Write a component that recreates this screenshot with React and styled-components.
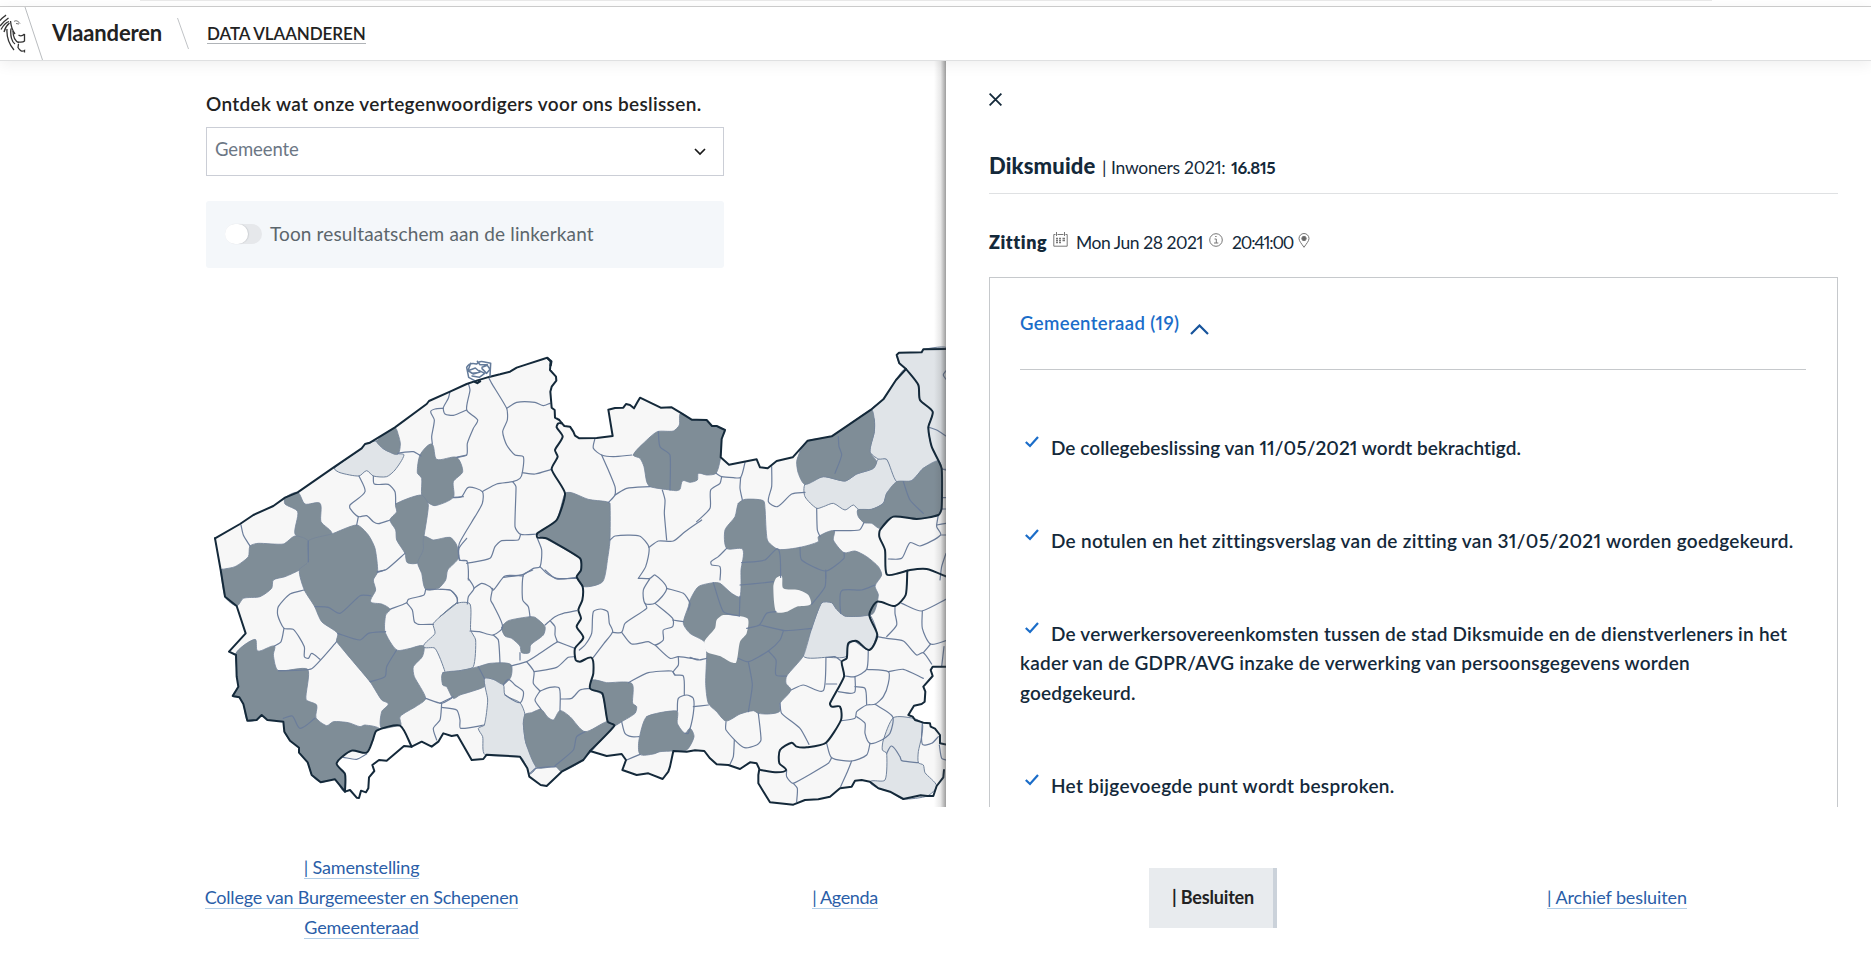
import React from 'react';
import styled, { createGlobalStyle } from 'styled-components';

const Global = createGlobalStyle`
  *, *::before, *::after { box-sizing: border-box; }
  body { margin: 0; background: #fff; font-family: Lato, "Liberation Sans", sans-serif; font-size: 18px; color: #14293a; font-variant-numeric: proportional-nums; }
  p, h1, h2 { margin: 0; font-weight: inherit; font-size: inherit; }
`;

/* ---------- shared text ---------- */
const Text = styled.span`
  font-size: ${(p) => p.$size || 18}px;
  font-weight: ${(p) => p.$weight || 400};
  letter-spacing: ${(p) => p.$track || 0}px;
  color: ${(p) => p.$color || 'inherit'};
  white-space: nowrap;
`;

/* ---------- header ---------- */
const TopStrip = styled.div`
  height: 7px;
  padding-left: 140px;
  border-bottom: 1px solid #cfcfcf;
  &::before { content: ''; display: block; width: 1572px; height: 1px; background: #e9e9e9; }
`;
const Header = styled.header`
  position: relative;
  z-index: 3;
  display: flex;
  height: 54px;
  background: #fff;
  border-bottom: 1px solid #dfe0e1;
  box-shadow: 0 3px 14px rgba(0, 0, 0, 0.07);
`;
const Brand = styled.div`
  width: 133px;
  padding-left: 8px;
  line-height: 51px;
`;
const HeaderLink = styled.a`
  align-self: flex-start;
  margin: 10px 0 0 18px;
  height: 27px;
  line-height: 32px;
  border-bottom: 1px solid #b0b4b8;
`;

/* ---------- body ---------- */
const Main = styled.main`
  display: grid;
  grid-template-columns: 946px 925px;
  height: 746px;
`;
const MapSide = styled.section`
  position: relative;
  display: flex;
  flex-direction: column;
  padding: 28px 0 0 206px;
  overflow: hidden;
  &::after {
    content: '';
    position: absolute;
    top: 0; right: 0; bottom: 0;
    width: 12px;
    background: linear-gradient(to right, rgba(60,60,60,0), rgba(60,60,60,0.12) 55%, rgba(60,60,60,0.5));
  }
`;
const Label = styled.h1`
  height: 30px;
  line-height: 30px;
`;
const Select = styled.div`
  display: flex;
  justify-content: space-between;
  width: 518px;
  height: 49px;
  margin-top: 8px;
  padding: 0 17px 0 8px;
  border: 1px solid #cbced6;
  line-height: 43px;
  svg { margin-top: 20px; }
`;
const ToggleCard = styled.div`
  display: flex;
  align-items: center;
  width: 518px;
  height: 67px;
  margin-top: 25px;
  padding: 0 0 3px 19px;
  gap: 8px;
  border-radius: 3px;
  background: #f4f7fa;
`;
const Switch = styled.div`
  width: 37px;
  height: 20px;
  margin-top: 2px;
  border-radius: 10px;
  background: #e6e8eb;
  &::before {
    content: '';
    display: block;
    width: 23px;
    height: 20px;
    border-radius: 10px;
    background: #fff;
    box-shadow: 1px 0 1px #cdd0d4;
  }
`;
const MapSvg = styled.svg`
  display: block;
  flex: none;
  margin: 72px 0 0 -1px;
`;

/* ---------- details panel ---------- */
const Details = styled.section`
  padding: 32px 33px 0 43px;
  overflow: hidden;
`;
const CloseIcon = styled.svg`
  display: block;
`;
const Place = styled.div`
  display: flex;
  align-items: baseline;
  height: 51px;
  margin-top: 37px;
  line-height: 46px;
  border-bottom: 1px solid #dfe1e3;
`;
const Session = styled.div`
  display: flex;
  height: 30px;
  margin-top: 33px;
  line-height: 30px;
`;
const Slot = styled.span`
  width: ${(p) => p.$w}px;
  flex: none;
  svg { display: block; margin-top: ${(p) => p.$top || 0}px; }
`;
const Card = styled.div`
  height: 560px;
  margin-top: 20px;
  padding: 30px 31px 0 30px;
  border: 1px solid #c6c9cc;
`;
const CardHead = styled.div`
  display: flex;
  height: 62px;
  line-height: 30px;
  border-bottom: 1px solid #c6c9cc;
  svg { margin: 16px 0 0 11px; }
`;
const Decisions = styled.div`
  padding-top: 63px;
`;
const Decision = styled.p`
  margin-bottom: 63.2px;
  line-height: 29.7px;
`;
const Line = styled.span`
  display: flex;
  svg { flex: none; margin: 3px 12px 0 5px; }
`;

/* ---------- footer ---------- */
const Footer = styled.footer`
  display: grid;
  grid-template-columns: 723px 244px 492px 316px;
  align-items: center;
  height: 90px;
  margin-top: 45px;
`;
const FooterCol = styled.nav`
  display: flex;
  flex-direction: column;
  align-items: center;
  gap: 3px;
  padding-bottom: ${(p) => (p.$boxed ? 0 : 4)}px;
`;
const FooterLink = styled.a`
  height: 27px;
  line-height: 30px;
  border-bottom: 1px solid #b3cfe8;
`;
const Active = styled.a`
  width: 128px;
  height: 60px;
  padding-left: 23px;
  line-height: 59px;
  background: #e8ebee;
  border-right: 4px solid #cbd2da;
`;

/* ---------- map geometry ---------- */
const ORIGIN = { A: [0, 0], B: [705, 0], C: [1455, 0], D: [0, 690], E: [705, 690], F: [1455, 690] };

/* "A 10,20 30,40 B 5,6" -> list of points on the whole map */
const parse = (text) => {
  let o = ORIGIN.A;
  const out = [];
  text.trim().split(/\s+/).forEach((t) => {
    if (ORIGIN[t]) o = ORIGIN[t];
    else {
      const [x, y] = t.split(',').map(Number);
      out.push([x + o[0], y + o[1]]);
    }
  });
  return out;
};
const straight = (text, close) => 'M' + parse(text).map((p) => p.join(' ')).join('L') + (close ? 'Z' : '');
const smooth = (text, close) => {
  const p = parse(text);
  const n = p.length;
  const at = (i) => (close ? p[(i + n) % n] : p[Math.max(0, Math.min(n - 1, i))]);
  /* control point: along from->to, a quarter of the segment long */
  const handle = (base, from, to, len, sign) => {
    const dx = to[0] - from[0];
    const dy = to[1] - from[1];
    const m = Math.min(0.22 * len, 14) / (Math.hypot(dx, dy) || 1);
    return `${(base[0] + sign * dx * m).toFixed(1)} ${(base[1] + sign * dy * m).toFixed(1)}`;
  };
  let d = `M${p[0].join(' ')}`;
  for (let i = 0; i < (close ? n : n - 1); i++) {
    const [a, b, c, e] = [at(i - 1), at(i), at(i + 1), at(i + 2)];
    const len = Math.hypot(c[0] - b[0], c[1] - b[1]);
    d += `C${handle(b, a, c, len, 1)} ${handle(c, b, e, len, -1)} ${c.join(' ')}`;
  }
  return d + (close ? 'Z' : '');
};

const NORTH = 'A 30,595 105,552 145,525 205,498 240,473 278,457 385,383 470,325 480,312 495,308 570,262 665,192 672,183 735,155 B 80,132 110,122 150,110 180,103 210,95 230,83 260,73 310,57 322,53 332,65 330,90 348,110 349,122 335,140 331,155 335,203 344,210 345,233 358,240 366,250 373,258 390,260 400,275 405,287 418,295 470,294 518,288 505,209 525,204 550,203 558,192 570,195 582,205 592,187 600,173 662,203 695,202 725,220 755,239 C 20,239 50,240 66,258 80,258 105,270 95,297 92,352 117,374 200,358 210,382 233,385 260,363 308,352 353,302 425,289 543,209 580,178 618,120 648,87 628,70 620,45 627,38 695,37 700,28 775,27';
const EAST = 'F 775,290 728,290 722,300 728,318 700,350 706,365 704,395 695,402 672,407 655,435 668,440 675,450 700,458 720,460 722,470 735,476 750,495 750,520 775,525';
const SOUTH = 'F 762,600 760,622 740,648 730,678 712,678 692,676 640,687 600,665 565,655 540,635 515,630 495,632 485,650 450,655 420,680 385,688 345,690 310,704 240,697 205,640 205,615 208,597 200,580 180,577 150,597 115,585 80,583 60,565 43,543 15,541 E 740,545 700,543 690,590 685,605 668,627 625,610 590,615 547,600 558,570 545,552 500,558 450,543 430,570 365,605 320,648 302,645 268,620 262,595 240,560 140,554 130,567 95,570 52,495 35,498 10,490 D 700,515 680,530 650,515 620,530 597,528 545,572 522,570 502,585 508,603 492,622 490,655 483,667 468,662 462,684 455,683 435,660 420,665 390,628 347,637 320,615 308,577 282,548 282,533 255,512 238,485 235,455 187,450 170,435 155,450 127,452 115,402 103,382 83,378 100,350 95,320 93,255 72,245 122,190 95,108 60,80 47,0 A 30,595';

const LAND = `${NORTH} ${EAST} ${SOUTH}`;
const ENCLAVE = 'D 620,530 585,467 515,482 503,512 485,548 460,560 440,567 415,562 395,580 420,612 420,665 435,660 455,683 462,684 468,662 483,667 490,655 492,622 508,603 502,585 522,570 545,572 597,528';

const DARK = [
  'A 515,303 570,264 580,285 586,312 578,343 545,332 530,322',
  'A 240,473 278,457 300,492 345,490 348,545 380,582 310,603 270,582 278,515 240,492',
  'A 645,345 680,312 695,358 755,352 773,395 745,425 745,472 690,497 665,485 650,465 650,415 637,398',
  'A 572,492 648,465 670,495 657,590 655,630 640,668 607,668 600,640 575,600 572,570 555,540 575,515',
  'A 657,590 685,600 735,592 755,615 760,655 728,690 722,720 700,745 662,748 650,700 638,668 655,630',
  'A 52,688 90,680 130,650 135,618 160,610 235,612 270,588 310,603 310,665 283,690 240,710 205,720 D 200,55 165,80 115,85 95,108 60,80 47,0',
  'A 310,603 380,582 455,555 490,585 510,625 518,695 D 505,30 512,60 497,95 530,102 555,118 542,135 540,185 575,240 612,236 655,228 652,260 625,290 628,320 662,385 635,408 585,440 587,467 530,475 530,425 550,402 530,390 495,335 395,215 398,190 350,155 328,108 298,60 283,0 A 310,665',
  'D 93,250 150,208 158,243 208,228 205,255 220,302 308,298 303,388 335,405 333,443 365,467 385,455 430,458 465,470 480,465 525,478 503,512 485,548 440,542 395,580 420,612 420,665 390,628 347,637 320,615 308,577 282,548 282,533 255,512 238,485 235,455 187,450 170,435 155,450 127,452 115,402 103,382 83,378 100,350',
  'E 8,310 60,302 115,290 150,280 212,283 213,320 190,343 160,328 133,325 133,350 60,375 40,385 20,350 8,345',
  'E 185,172 205,152 270,140 285,142 315,170 310,195 272,225 268,248 245,248 240,228 215,205 195,198',
  'B 292,582 350,540 375,460 395,458 445,478 500,485 510,490 510,600 503,655 E 488,35 432,50 410,20 B 423,690 420,655 315,595',
  'B 580,345 610,310 652,275 700,273 718,255 722,220 755,239 C 50,240 66,258 105,270 95,297 92,352 78,400 50,405 25,400 22,420 0,427 B 728,422 720,448 710,452 690,450 630,440 620,425 612,380 600,355',
  'C 330,335 353,302 425,289 543,209 553,240 553,275 540,335 560,365 550,385 500,402 465,423 400,410 345,433 325,400 320,365',
  'C 503,510 545,508 580,490 590,460 620,425 665,422 700,385 745,362 755,385 755,505 745,525 680,537 610,530 570,565 545,550 522,548 505,530',
  'C 145,490 165,478 220,482 225,505 232,600 265,628 330,622 385,605 385,590 432,572 430,600 462,638 495,633 530,650 565,680 F 575,15 555,48 565,75 550,130 515,138 465,138 440,118 425,98 395,98 365,175 340,258 290,318 288,340 303,360 270,400 268,425 235,432 205,430 190,422 150,432 108,453 80,425 55,400 47,340 50,250 43,215 0,190 E 730,160 745,110 F 0,90 25,50 70,38 90,40 125,70 150,80 153,0 C 158,628 110,625 105,570 135,530',
  'E 458,330 500,338 575,340 578,400 590,410 585,430 545,455 523,467 503,455 487,375 450,355',
  'E 255,433 275,428 303,418 322,440 340,450 360,422 390,440 435,485 500,455 520,467 430,570 365,605 347,590 290,592 258,520 250,460',
  'E 620,440 710,423 712,460 735,490 750,475 762,500 740,540 700,543 660,545 640,552 600,553 597,510',
];
const PALE = [
  'A 388,385 470,325 480,312 515,303 530,322 545,332 578,341 597,345 570,390 545,410 505,408 485,392 462,408 405,398',
  'E 0,140 50,100 90,102 92,180 107,210 100,290 60,302 8,308 D 720,305 690,235 655,230 690,190 685,160 755,98 E 50,100',
  'E 133,325 160,328 190,343 195,375 240,398 255,433 250,460 258,520 288,590 270,612 262,595 240,560 135,554 128,500 115,475 133,465 143,390',
  'C 345,433 400,410 465,423 500,402 550,385 565,357 590,358 620,425 590,460 580,490 545,508 505,508 490,495 465,510 430,490 400,500 380,505 345,470',
  'C 543,209 580,178 618,120 648,87 685,135 690,180 728,215 715,262 725,320 745,362 700,385 665,422 620,425 590,358 565,357 540,335 553,275 553,240',
  'C 627,38 695,37 700,28 775,27 775,390 755,385 745,362 725,320 715,262 728,215 690,180 685,135 648,87 628,70 620,45',
  'F 395,98 425,98 440,118 465,138 515,138 540,135 560,190 538,240 490,213 473,230 468,260 410,262 340,258 365,175',
  'F 610,443 670,445 697,460 695,500 685,545 685,578 700,585 705,608 740,648 712,678 640,687 600,665 565,655 540,635 585,630 590,550 577,540 580,510',
];
const PATCHES = [
  'F 100,135 172,145 170,190 150,215 138,278 120,275 90,258 50,245 43,215 75,175 80,150',
  'F 258,25 275,18 280,55 325,60 355,75 362,103 320,110 290,125 258,125 250,50',
];
const THIN = [
  'A 735,155 730,175 715,203 720,222 745,226 785,210', 'A 715,205 690,207 677,215 688,240 680,290 682,312',
  'A 755,352 785,345', 'A 578,340 595,337 625,335 648,348', 'A 505,408 508,432 550,433 570,455 572,492',
  'A 462,408 480,455 435,495 435,505 460,530 485,527 505,545 520,551 555,540', 'A 460,530 455,555',
  'A 108,555 115,585 135,618', 'A 517,697 545,688 600,640', 'A 745,472 775,470', 'A 310,603 310,665',
  'A 785,595 762,625 765,660 785,662',
  'B 85,130 90,150 80,210 113,240 100,265 82,310 80,345 52,352',
  'B 147,115 155,130 200,205 202,240 188,275 200,315 225,345 250,350 247,398 240,415 218,425 170,432 127,455',
  'B 200,205 230,187 285,187 310,197 330,190', 'B 247,398 285,402 335,388',
  'B 40,473 65,470 85,442 127,455 127,490 105,530 58,610 58,660 80,662 85,690 85,720',
  'B 218,425 228,440 225,560 242,583 292,582', 'B 242,583 235,600 185,602 165,620 150,655 80,670',
  'B 292,595 305,630 300,680 280,685 250,703 190,712', 'B 300,680 320,700 350,715 410,715',
  'B 465,295 460,325 485,345 520,350 575,345', 'B 485,345 505,390 525,440 525,465 505,488',
  'B 525,465 560,445 630,440', 'B 667,450 675,480 673,520 680,600', 'B 510,600 525,588 598,588 627,622 617,680 595,715',
  'B 627,622 655,603 700,603 735,575 785,540', 'B 655,275 660,320 690,345 690,450',
  'E 595,25 630,25 645,15 680,55 645,100 615,100 610,60 630,25',
  'C 78,400 95,410 130,413 152,412 165,368', 'C 152,412 150,445 157,480',
  'C 245,380 245,440 235,485 262,500 305,462 345,457', 'C 95,410 90,430 62,450 60,505 20,545',
  'C 380,505 382,570 390,590', 'C 445,290 447,320 455,345 435,400', 'C 432,572 508,570 522,548',
  'C 640,425 660,480 700,520', 'C 717,262 740,270 768,288', 'C 772,88 760,105 772,122',
  'C 110,625 85,650 63,665 65,675 90,680 90,720', 'C 155,668 225,660 265,628 272,712',
  'C 330,622 335,660 407,693 462,655 462,638', 'C 407,693 407,715',
  'C 595,657 635,655 660,608 690,618 752,585 740,560 745,525', 'C 740,555 768,550', 'C 755,585 768,585',
  'C 757,388 768,388', 'C 757,473 768,473', 'C 757,507 768,507', 'C 768,640 755,680 750,720',
  'D 298,60 255,72 220,110 218,135 237,175 265,178 298,230 298,260 310,265 320,250 345,268',
  'D 237,175 228,215 208,228', 'D 220,302 320,296 395,215', 'D 330,110 370,112 405,130 465,77 497,77',
  'D 398,190 465,210 490,190 542,185', 'D 575,240 545,290 540,320 495,335', 'D 235,445 262,438 285,475 330,445',
  'D 517,5 540,0', 'D 662,58 657,75 610,88 605,98 555,118', 'D 605,98 622,120 628,155 640,163 685,163',
  'D 662,58 735,60 757,85 757,98', 'D 662,385 710,400 740,385',
  'D 710,400 705,450 685,475 695,510', 'D 710,412 755,420 765,450 767,475 838,465', 'D 415,562 455,568 485,552',
  'E 85,25 102,55 85,80 82,102', 'E 102,55 125,40 150,50 160,60 195,18 250,18',
  'E 158,55 152,90 160,105 188,170 160,195 118,185 90,183', 'E 278,0 250,15 248,90 265,110 270,140',
  'E 315,0 350,27 410,22', 'E 160,195 175,210 180,278', 'E 0,58 30,60 50,80 53,100',
  'E 315,165 345,140 370,130 410,122', 'E 330,152 345,170 345,195 352,215', 'E 240,248 240,270',
  'E 352,215 405,235', 'E 212,288 260,275 300,250 352,215', 'E 260,275 282,305 280,340 300,363',
  'E 282,305 350,292 385,262 405,260', 'E 190,345 205,328 225,345 250,365 240,398 195,375',
  'E 300,363 330,352 358,355 360,422', 'E 300,363 285,390 303,418', 'E 362,387 395,385 420,360 450,355',
  'E 418,240 435,225 455,190 460,125 482,117 503,125 508,160 518,185 492,220 460,262',
  'E 518,187 545,187 555,160 620,115 615,100', 'E 545,187 575,222 625,215 645,225 670,210 670,180 698,170 698,145 645,100',
  'E 680,55 730,70 750,100 745,120', 'E 698,150 730,155', 'E 645,225 690,265 715,260 775,268',
  'E 715,260 715,285 700,305 705,315 730,318 733,375', 'E 565,338 625,308 695,303 705,315',
  'E 712,423 715,385 740,375 760,385 760,430 745,490 735,490', 'E 545,455 555,490 575,500 597,500', 'E 560,570 600,553',
  'E 0,400 40,380', 'E 345,587 400,540 410,500 435,485', 'E 270,610 288,595 347,590', 'E 115,290 133,325',
  'F 70,38 100,125 148,138', 'F 150,80 148,138', 'F 150,45 225,38 250,35', 'F 258,125 230,130 208,165 170,175',
  'F 210,165 285,182 365,175', 'F 280,183 270,210 235,243 175,275 145,265', 'F 235,243 258,270 258,315 290,318',
  'F 175,275 187,345 175,425', 'F 365,103 405,50 407,0', 'F 555,45 515,60 455,62 450,100 452,130',
  'F 0,262 25,270 50,265', 'F 10,410 55,405', 'F 108,455 108,480 160,532 200,525 213,510 205,430',
  'F 133,510 130,560 120,583', 'F 270,400 275,430 330,475 357,523', 'F 303,360 340,345 400,362 408,262',
  'F 408,342 440,342', 'F 410,262 435,260 452,272', 'F 465,318 495,320 530,298 535,240', 'F 495,320 495,365 480,370 445,365',
  'F 495,350 525,355 530,403', 'F 530,298 595,305 595,340 580,380 555,403 530,405 500,425 495,445 455,452',
  'F 555,403 608,440 600,490 575,510 540,520 525,490 525,460 500,440', 'F 595,305 640,298 700,325',
  'F 562,200 590,205 640,213 680,255 700,248 725,282', 'F 615,108 615,130 620,165 590,200',
  'F 635,100 695,123 768,88', 'F 697,123 697,175 722,222 768,212', 'F 722,222 700,248', 'F 762,230 755,290',
  'F 697,460 697,523 725,520 745,500', 'F 540,520 530,555 485,573 425,563 410,520', 'F 485,573 470,610 452,650',
  'F 425,563 415,580 310,640 290,620 290,600', 'F 310,640 322,655 320,695',
  'F 590,550 605,528 630,560 635,572 685,578', 'F 748,525 755,565 768,570',
];
const THICK = [
  'B 366,250 355,250 350,262 368,290 345,330 353,350 335,388 375,460 350,540 292,580 292,592 320,595 420,655 423,690 410,710 E 428,50 427,90 415,120 423,145 410,170 430,203 405,235 407,270 420,275 455,263 460,310 450,355 487,370 503,455 523,467 450,543',
  'C 648,87 685,135 690,180 728,215 715,262 725,320 755,385 755,505 745,525 680,537 610,530 570,570 568,590 585,630 590,703 625,700 660,690 710,687 775,712',
  'C 652,692 F 647,75 615,108 562,95 538,135 562,195 538,240 500,213 475,220 470,265 455,275 462,320 420,400 425,410 450,410 453,450 408,518 350,532 320,530 305,518 270,540 268,580 288,600 260,607 212,600',
  'D 620,530 585,467 515,482 503,512 485,548 440,542 395,580 420,612 420,665',
];
const SCRIBBLE = 'M80 82c8-16 22-12 30-10 8-12 20-8 42-2l-2 38M80 82l6 30 18 10M92 70l-8 22 22-8 14 12-20 6-12-8M112 64l8 10 22 0M126 82l16-6 8 12-10 12-14-14M96 108l22 4 16-12-16-8M84 92l12 8 16-2';

function FlandersMap() {
  return (
    <MapSvg width="741" height="467" viewBox="0 0 2223 1401" fill="none" strokeLinejoin="round" strokeLinecap="round">
      <path d={straight(LAND, true)} fill="#f7f7f7" />
      <g fill="#e0e4e8" stroke="#71839c" strokeWidth="3">{PALE.map((d) => <path key={d} d={smooth(d, true)} />)}</g>
      <g fill="#7f8d97" stroke="#76869a" strokeWidth="2.5">{DARK.map((d) => <path key={d} d={smooth(d, true)} />)}</g>
      <g fill="#f7f7f7">{PATCHES.map((d) => <path key={d} d={smooth(d, true)} />)}</g>
      <path d={straight(ENCLAVE, true)} fill="#fff" />
      <g stroke="#6b7d9b" strokeWidth="3.6">{THIN.map((d) => <path key={d} d={smooth(d)} />)}</g>
      <g stroke="#14293a" strokeWidth="6">
        {[NORTH, EAST, SOUTH].map((d) => <path key={d} d={straight(d)} />)}
        {THICK.map((d) => <path key={d} d={smooth(d)} />)}
      </g>
      <g transform="translate(705 0)">
        <path d={SCRIBBLE} stroke="#647b9a" strokeWidth="4.6" />
        <path d="M104 125l8 4 8-5M324 56l10 8-2 12" stroke="#14293a" strokeWidth="7" />
      </g>
    </MapSvg>
  );
}

/* ---------- icons ---------- */
const Lion = () => (
  <svg width="44" height="53" viewBox="0 0 44 53" fill="none" stroke="#333" strokeWidth="1.3">
    <path d="M25 0L42.500 53" stroke="#b9bcbf" strokeWidth="1" />
    <path d="M0 13.500C2 11 4 10 6 8M0 19C3 15 5 13.500 8.500 11M1 22.500C4 17 6 15.500 9 14.500M4 25C5 21 7 18 9.500 16M10.500 14C11 19 12 23 15 27M7 22C6.500 29 8 36 14 43M11 21.500C10 29 12 35 15 37" />
    <path d="M14 14.500C16 13 18 14 20 16.500M16 16.500L19 17" strokeWidth="0.700" />
    <path d="M13 24C13 31 15 34 19 36M18.500 28C20.500 29.500 23 28.500 24.500 27M24.500 27V34C22.500 36 20 35 17.500 35M18.500 37L18 40.500C20 44 22 45 24.500 43.500V45.500" />
  </svg>
);
const Check = () => (
  <svg width="14" height="12" viewBox="0 0 14 12" fill="none" stroke="#1b6dc9" strokeWidth="2.200">
    <path d="M0.800 6L5 10L13 1" />
  </svg>
);
const Calendar = () => (
  <svg width="15" height="15" viewBox="0 0 15 15" fill="none" stroke="#777" strokeWidth="1">
    <path d="M2.500 2.500H.8V14.200H14.200V2.500H12.500M4.500 2.500H10.500M3.500 0V4M11.500 0V4" />
    <path d="M3 6.500H5M6 6.500H8M9.500 6.500H12M3 8.500H5M6 8.500H8M9.500 8.500H12M3 10.500H5M6 10.500H8" strokeWidth="1.400" />
  </svg>
);
const Info = () => (
  <svg width="14" height="14" viewBox="0 0 14 14" fill="none" stroke="#777">
    <circle cx="7" cy="7" r="6.300" />
    <path d="M5.500 6H7.300V10M5 10H9.300M6.200 3.500H7.600" />
  </svg>
);
const Pin = () => (
  <svg width="12" height="15" viewBox="0 0 12 15" fill="none" stroke="#777">
    <path d="M6 14.300C3.500 10.500 1 8 1 5.500A5 5 0 0 1 11 5.500C11 8 8.500 10.500 6 14.300Z" />
    <circle cx="6" cy="5.500" r="2.200" fill="#666" />
  </svg>
);

/* each line: text, letter-spacing */
const DECISIONS = [
  [['De collegebeslissing van 11/05/2021 wordt bekrachtigd.', 0.04]],
  [['De notulen en het zittingsverslag van de zitting van 31/05/2021 worden goedgekeurd.', 0.28]],
  [
    ['De verwerkersovereenkomsten tussen de stad Diksmuide en de dienstverleners in het', 0.22],
    ['kader van de GDPR/AVG inzake de verwerking van persoonsgegevens worden', 0.24],
    ['goedgekeurd.', 0.18],
  ],
  [['Het bijgevoegde punt wordt besproken.', 0.32]],
];

export default function App() {
  return (
    <>
      <Global />
      <TopStrip />
      <Header>
        <Lion />
        <Brand><Text $size={22} $weight={700} $color="#222" $track={-0.17}>Vlaanderen</Text></Brand>
        <svg width="12" height="53" viewBox="0 0 12 53" stroke="#c0c3c6"><path d="M.5 11L11.500 42" /></svg>
        <HeaderLink><Text $size={17} $weight={600} $color="#222" $track={-0.08}>DATA VLAANDEREN</Text></HeaderLink>
      </Header>
      <Main>
        <MapSide>
          <Label><Text $size={19} $weight={600} $color="#222" $track={0.325}>Ontdek wat onze vertegenwoordigers voor ons beslissen.</Text></Label>
          <Select>
            <Text $size={18.5} $color="#6c7785" $track={-0.1}>Gemeente</Text>
            <svg width="12" height="8" viewBox="0 0 12 8" fill="none" stroke="#1a1a1a" strokeWidth="1.700"><path d="M1 1L6 6L11 1" /></svg>
          </Select>
          <ToggleCard>
            <Switch />
            <Text $size={19} $color="#5c666c" $track={0.14}>Toon resultaatschem aan de linkerkant</Text>
          </ToggleCard>
          <FlandersMap />
        </MapSide>
        <Details>
          <CloseIcon width="13" height="13" viewBox="0 0 13 13" stroke="#14293a" strokeWidth="1.800"><path d="M.6.600L12.400 12.400M12.400.600L.6 12.400" /></CloseIcon>
          <Place>
            <Slot $w={113}><Text $size={22} $weight={900} $track={0.15}>Diksmuide</Text></Slot>
            <Slot $w={9}><Text>|</Text></Slot>
            <Slot $w={120}><Text $size={17.5} $track={-0.26}>Inwoners 2021:</Text></Slot>
            <Text $size={17} $weight={700} $track={-0.5}>16.815</Text>
          </Place>
          <Session>
            <Slot $w={64}><Text $weight={800} $track={0.55}>Zitting</Text></Slot>
            <Slot $w={23} $top={5}><Calendar /></Slot>
            <Slot $w={133}><Text $size={17.5} $track={-0.45}>Mon Jun 28 2021</Text></Slot>
            <Slot $w={23} $top={6}><Info /></Slot>
            <Slot $w={66}><Text $size={17.5} $track={-1.15}>20:41:00</Text></Slot>
            <Slot $w={12} $top={6}><Pin /></Slot>
          </Session>
          <Card>
            <CardHead>
              <Text $size={18.5} $weight={600} $color="#1b6dc9" $track={0.38}>Gemeenteraad (19)</Text>
              <svg width="19" height="11" viewBox="0 0 19 11" fill="none" stroke="#17549c" strokeWidth="2.200"><path d="M1 10L9.500 1.500L18 10" /></svg>
            </CardHead>
            <Decisions>
              {DECISIONS.map((lines) => (
                <Decision key={lines[0][0]}>
                  {lines.map(([line, track], i) => (
                    <Line key={line}>{i === 0 && <Check />}<Text $size={19} $weight={600} $track={track}>{line}</Text></Line>
                  ))}
                </Decision>
              ))}
            </Decisions>
          </Card>
        </Details>
      </Main>
      <Footer>
        <FooterCol>
          <FooterLink><Text $color="#2a5ea8" $track={-0.15}>| Samenstelling</Text></FooterLink>
          <FooterLink><Text $color="#2a5ea8" $track={-0.22}>College van Burgemeester en Schepenen</Text></FooterLink>
          <FooterLink><Text $color="#2a5ea8" $track={-0.18}>Gemeenteraad</Text></FooterLink>
        </FooterCol>
        <FooterCol><FooterLink><Text $color="#2a5ea8" $track={-0.37}>| Agenda</Text></FooterLink></FooterCol>
        <FooterCol $boxed><Active><Text $weight={700} $color="#222" $track={-0.17}>| Besluiten</Text></Active></FooterCol>
        <FooterCol><FooterLink><Text $color="#2a5ea8" $track={-0.1}>| Archief besluiten</Text></FooterLink></FooterCol>
      </Footer>
    </>
  );
}
